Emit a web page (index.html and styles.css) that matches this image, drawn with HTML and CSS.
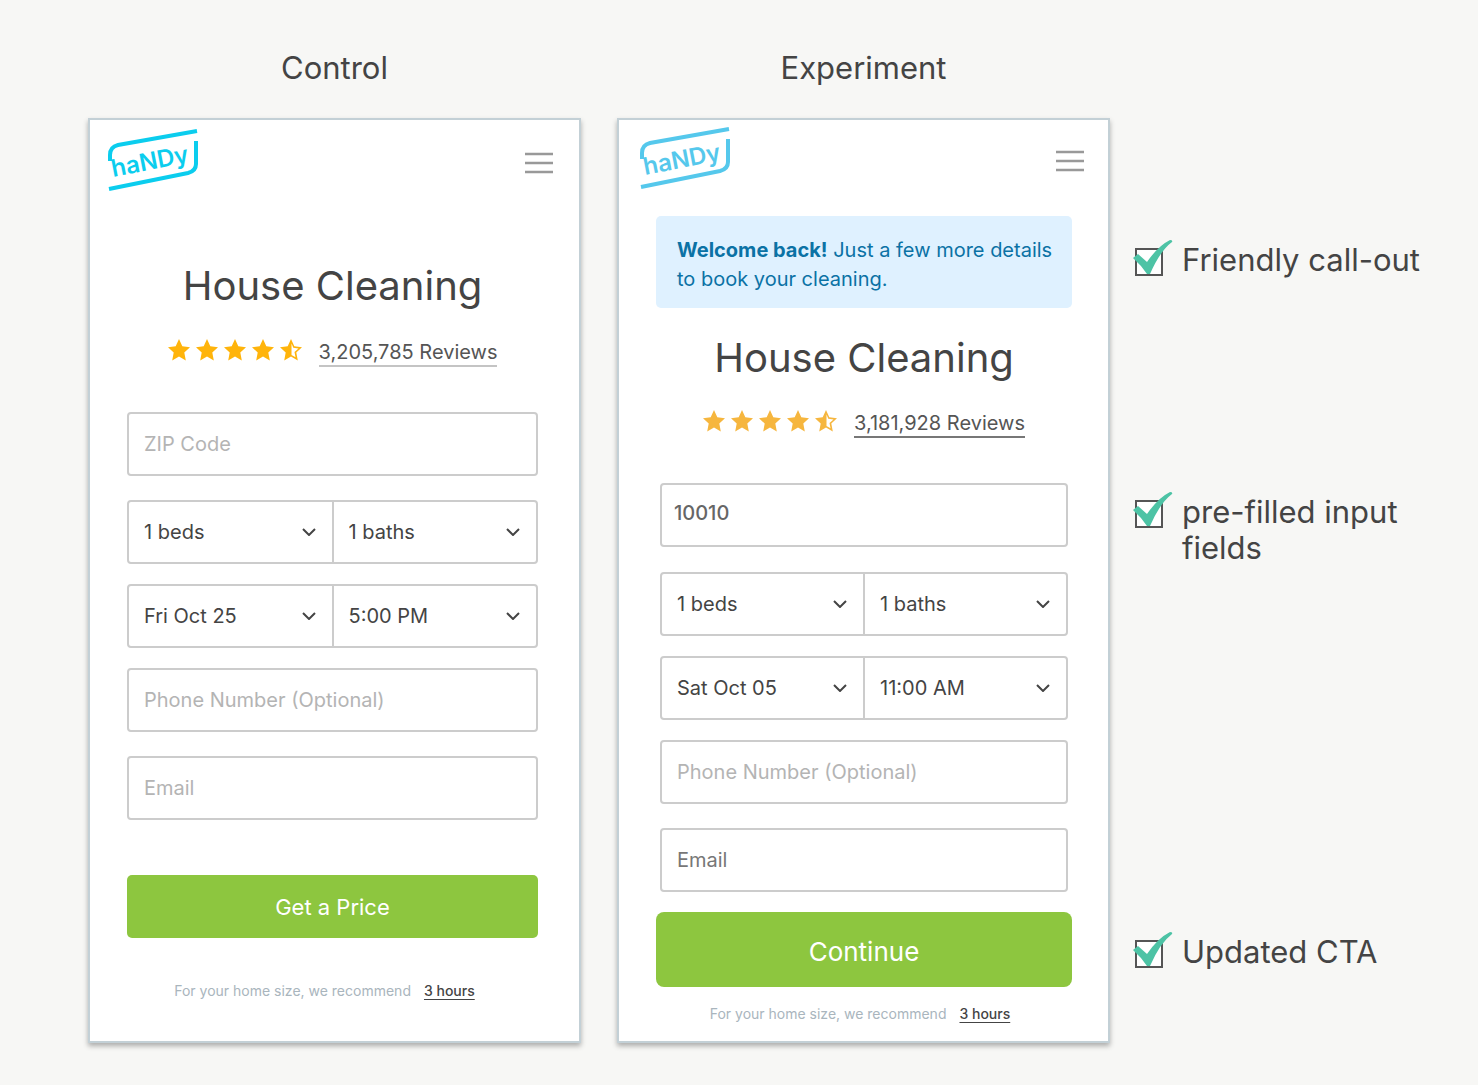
FILE: index.html
```html
<!DOCTYPE html>
<html lang="en">
<head>
<meta charset="utf-8">
<meta name="viewport" content="width=device-width, initial-scale=1">
<title>House Cleaning: Control and Experiment</title>
<link rel="stylesheet" href="styles.css">
</head>
<body>
<svg class="sprite" aria-hidden="true">
  <symbol id="star" viewBox="0 0 22 22">
    <path fill="currentColor" d="M11 0L14.300 7.200L22 8.200L16.300 13.600L17.800 21.500L11 17.600L4.200 21.500L5.700 13.600L0 8.200L7.700 7.200Z"/>
  </symbol>
  <symbol id="half-star" viewBox="0 0 22 22">
    <path fill="currentColor" fill-rule="evenodd" d="M11 0L14.300 7.200L22 8.200L16.300 13.600L17.800 21.500L11 17.600L4.200 21.500L5.700 13.600L0 8.200L7.700 7.200ZM11.500 4.500V16L15.500 18.300L14.500 13L18.500 9.500L13.300 8.800Z"/>
  </symbol>
  <symbol id="chevron" viewBox="0 0 14 8">
    <path fill="none" stroke="currentColor" stroke-width="2" d="M1 1L7 7L13 1"/>
  </symbol>
  <symbol id="menu" viewBox="0 0 28 24">
    <path fill="none" stroke="currentColor" stroke-width="2.500" d="M0 2H28M0 11H28M0 20H28"/>
  </symbol>
  <symbol id="check" viewBox="0 0 40 36">
    <path fill="currentColor" d="M0 18L5 14L14 22Q25 6 37 0Q40 0 39 2Q27 11 17 34H14Q8 25 0 18Z"/>
  </symbol>
</svg>
<main class="page">
  <div class="variants">
    <section class="variant control">
      <h2 class="variant-name">Control</h2>
      <div class="card">
        <header class="topbar">
          <a class="logo" href="#" aria-label="Handy"><svg viewBox="0 0 90 64"><path class="logo-frame" d="M2 33V27Q2 19 10 17L89 3M88 13V36Q88 43 80 45L1 61"/><text class="logo-name" transform="translate(5 49) rotate(-11)">haNDy</text></svg></a>
          <button class="menu" type="button" aria-label="Menu"><svg><use href="#menu"/></svg></button>
        </header>
        <h1 class="title">House Cleaning</h1>
        <div class="rating">
          <span class="stars"><svg><use href="#star"/></svg><svg><use href="#star"/></svg><svg><use href="#star"/></svg><svg><use href="#star"/></svg><svg><use href="#half-star"/></svg></span>
          <a class="reviews" href="#">3,205,785 Reviews</a>
        </div>
        <form class="form">
          <input class="field zip" type="text" aria-label="ZIP Code" placeholder="ZIP Code">
          <div class="pair">
            <div class="choice"><select aria-label="Bedrooms"><option>1 beds</option></select><svg><use href="#chevron"/></svg></div>
            <div class="choice"><select aria-label="Bathrooms"><option>1 baths</option></select><svg><use href="#chevron"/></svg></div>
          </div>
          <div class="pair">
            <div class="choice"><select aria-label="Date"><option>Fri Oct 25</option></select><svg><use href="#chevron"/></svg></div>
            <div class="choice"><select aria-label="Time"><option>5:00 PM</option></select><svg><use href="#chevron"/></svg></div>
          </div>
          <input class="field phone" type="tel" aria-label="Phone Number" placeholder="Phone Number (Optional)">
          <input class="field email" type="email" aria-label="Email" placeholder="Email">
          <button class="submit" type="button">Get a Price</button>
        </form>
        <p class="advice">For your home size, we recommend <a href="#">3 hours</a></p>
      </div>
    </section>
    <section class="variant experiment">
      <h2 class="variant-name">Experiment</h2>
      <div class="card">
        <header class="topbar">
          <a class="logo" href="#" aria-label="Handy"><svg viewBox="0 0 90 64"><path class="logo-frame" d="M2 33V27Q2 19 10 17L89 3M88 13V36Q88 43 80 45L1 61"/><text class="logo-name" transform="translate(5 49) rotate(-11)">haNDy</text></svg></a>
          <button class="menu" type="button" aria-label="Menu"><svg><use href="#menu"/></svg></button>
        </header>
        <p class="callout"><strong>Welcome back!</strong> Just a few more details to book your cleaning.</p>
        <h1 class="title">House Cleaning</h1>
        <div class="rating">
          <span class="stars"><svg><use href="#star"/></svg><svg><use href="#star"/></svg><svg><use href="#star"/></svg><svg><use href="#star"/></svg><svg><use href="#half-star"/></svg></span>
          <a class="reviews" href="#">3,181,928 Reviews</a>
        </div>
        <form class="form">
          <input class="field zip" type="text" aria-label="ZIP Code" value="10010">
          <div class="pair">
            <div class="choice"><select aria-label="Bedrooms"><option>1 beds</option></select><svg><use href="#chevron"/></svg></div>
            <div class="choice"><select aria-label="Bathrooms"><option>1 baths</option></select><svg><use href="#chevron"/></svg></div>
          </div>
          <div class="pair">
            <div class="choice"><select aria-label="Date"><option>Sat Oct 05</option></select><svg><use href="#chevron"/></svg></div>
            <div class="choice"><select aria-label="Time"><option>11:00 AM</option></select><svg><use href="#chevron"/></svg></div>
          </div>
          <input class="field phone" type="tel" aria-label="Phone Number" placeholder="Phone Number (Optional)">
          <input class="field email" type="email" aria-label="Email" placeholder="Email">
          <button class="submit" type="button">Continue</button>
        </form>
        <p class="advice">For your home size, we recommend <a href="#">3 hours</a></p>
      </div>
    </section>
  </div>
  <aside class="notes">
    <label class="note note-callout"><span class="tick"><input type="checkbox" checked><svg><use href="#check"/></svg></span><span>Friendly call-out</span></label>
    <label class="note note-fields"><span class="tick"><input type="checkbox" checked><svg><use href="#check"/></svg></span><span>pre-filled input fields</span></label>
    <label class="note note-cta"><span class="tick"><input type="checkbox" checked><svg><use href="#check"/></svg></span><span>Updated CTA</span></label>
  </aside>
</main>
</body>
</html>
```
FILE: styles.css
```css
* { box-sizing: border-box; }

body {
  margin: 0;
  background: #f7f7f5;
  color: #444;
  font-family: Inter, "Liberation Sans", sans-serif;
}

.sprite { position: absolute; width: 0; height: 0; }

.logo-frame { fill: none; stroke: currentColor; stroke-width: 4; }
.logo-name { fill: currentColor; font: 600 24px Inter, "Liberation Sans", sans-serif; }

.page {
  display: flex;
  gap: 24px;
  padding: 48px 24px 40px 88px;
}

.variants {
  flex: 1;
  display: grid;
  grid-template-columns: 1fr 1fr;
  gap: 36px;
}

.variant { display: flex; flex-direction: column; }

.variant-name {
  margin: 0 0 30px;
  font-size: 31px;
  font-weight: 400;
  line-height: 40px;
  text-align: center;
}

.card {
  flex: 1;
  padding: 0 41px 38px 37px;
  background: #fff;
  border: 2px solid #c3d0d6;
  box-shadow: 0 3px 5px rgba(0, 0, 0, .3);
}

.experiment .card { padding: 0 36px 16px 37px; }

.topbar {
  display: flex;
  justify-content: space-between;
  align-items: center;
  margin: 8px -15px 0 -19px;
}

.experiment .topbar { margin: 6px -12px 0 -16px; }

.logo { color: #0bcdee; }
.experiment .logo { color: #55c8ec; }
.logo svg { display: block; width: 90px; height: 64px; }

.menu { padding: 8px 0 0; border: 0; background: none; color: #999; }
.menu svg { display: block; width: 28px; height: 24px; }

.callout {
  margin: 26px 0 0;
  padding: 20px 16px 14px 21px;
  border-radius: 5px;
  background: #dff1ff;
  color: #0b72a5;
  font-size: 20px;
  line-height: 29px;
}

.title {
  margin: 68px 0 0;
  font-size: 40px;
  font-weight: 400;
  line-height: 52px;
  text-align: center;
}

.experiment .title { margin-top: 24px; }

.rating {
  display: flex;
  justify-content: center;
  align-items: center;
  gap: 17px;
  height: 32px;
  margin: 22px 0 46px;
}

.experiment .rating { margin-top: 21px; }

.stars { display: flex; gap: 6px; color: #ffb40b; }
.experiment .stars { color: #f6b63e; }
.stars svg { width: 22px; height: 22px; }

.reviews {
  padding-top: 5px;
  border-bottom: 2px solid #c4c4c4;
  color: #555;
  font-size: 20px;
  line-height: 26px;
  text-decoration: none;
}

.experiment .reviews { border-color: #777; }

.form { display: flex; flex-direction: column; }
.experiment .form { padding: 0 4px; }

.field, .pair {
  width: 100%;
  height: 64px;
  border: 2px solid #ccc;
  border-radius: 4px;
  background: #fff;
}

.field {
  padding: 0 15px;
  color: #666;
  font: 20px Inter, "Liberation Sans", sans-serif;
}

.field::placeholder { color: #b4b4b4; opacity: 1; }
.experiment .email::placeholder { color: #777; }
.experiment .zip { padding: 0 12px 4px; font-weight: 500; }

.zip { margin-bottom: 24px; }
.pair { display: flex; margin-bottom: 20px; }
.phone { margin-bottom: 24px; }
.email { margin-bottom: 55px; }
.experiment .email { margin-bottom: 20px; }
.experiment .zip { margin-bottom: 25px; }

.choice { position: relative; flex: 1; }
.choice + .choice { border-left: 2px solid #ccc; }

.choice select {
  width: 100%;
  height: 100%;
  padding: 0 36px 0 15px;
  border: 0;
  appearance: none;
  background: none;
  color: #444;
  font: 20px Inter, "Liberation Sans", sans-serif;
}

.choice svg {
  position: absolute;
  top: 26px;
  right: 16px;
  width: 14px;
  height: 8px;
  pointer-events: none;
}

.submit {
  height: 63px;
  border: 0;
  border-radius: 5px;
  background: #8dc63f;
  color: #fff;
  font: 22px Inter, "Liberation Sans", sans-serif;
}

.experiment .submit {
  height: 75px;
  margin: 0 -4px;
  padding-top: 4px;
  border-radius: 8px;
  font-size: 26px;
}

.advice {
  display: flex;
  justify-content: center;
  gap: 13px;
  margin: 42px 16px 0 0;
  color: #a9b5bd;
  font-size: 14px;
  line-height: 22px;
}

.experiment .advice { margin: 16px 8px 0 0; }
.advice a { color: #444; font-weight: 500; text-underline-offset: 3px; }

.notes { width: 320px; padding-top: 194px; }

.note {
  display: flex;
  gap: 18px;
  font-size: 31px;
  line-height: 36px;
}

.note-fields { margin: 216px 0 368px; }

.tick { position: relative; width: 30px; flex: none; }

.tick input {
  display: block;
  width: 28px;
  height: 28px;
  margin: 6px 0 0 1px;
  border: 2px solid #555;
  appearance: none;
  background: #fff;
}

.tick svg {
  position: absolute;
  top: -2px;
  left: -1px;
  width: 40px;
  height: 36px;
  color: #4dc3a5;
}
```
